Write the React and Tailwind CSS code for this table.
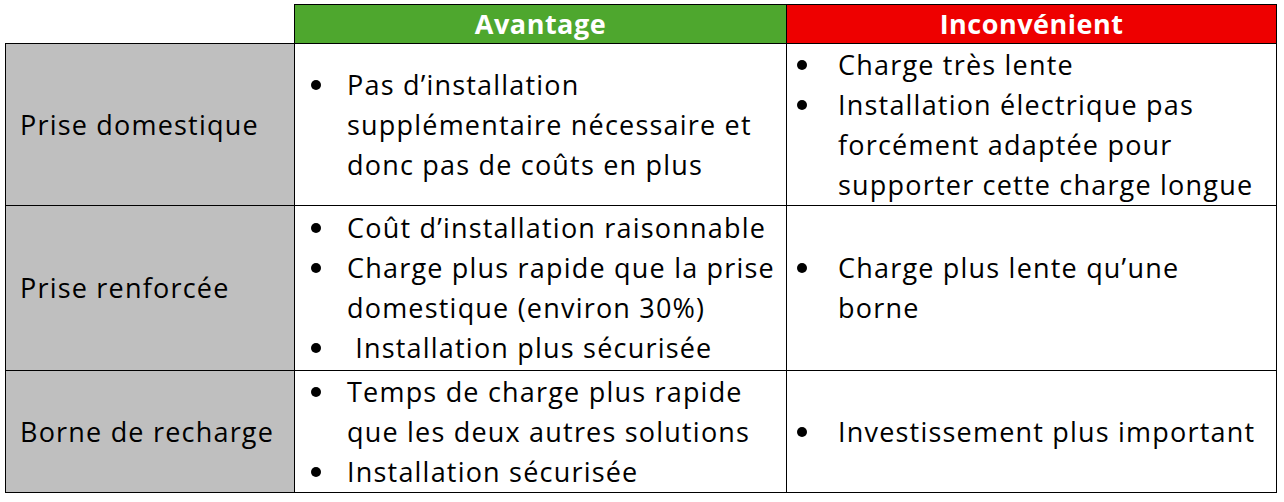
const rows = [
  {
    label: "Prise domestique",
    height: "h-[162px]",
    pros: [["Pas d’installation", "supplémentaire nécessaire et", "donc pas de coûts en plus"]],
    cons: [
      ["Charge très lente"],
      ["Installation électrique pas", "forcément adaptée pour", "supporter cette charge longue"],
    ],
  },
  {
    label: "Prise renforcée",
    height: "h-[165px]",
    pros: [
      ["Coût d’installation raisonnable"],
      ["Charge plus rapide que la prise", "domestique (environ 30%)"],
      ["\u00a0Installation plus sécurisée"],
    ],
    cons: [["Charge plus lente qu’une", "borne"]],
  },
  {
    label: "Borne de recharge",
    height: "h-[122px]",
    pros: [["Temps de charge plus rapide", "que les deux autres solutions"], ["Installation sécurisée"]],
    cons: [["Investissement plus important"]],
  },
];

function Bullets({ items, compact }) {
  return (
    <ul className="flex flex-col">
      {items.map((lines) => (
        <li key={lines[0]} className="flex items-start">
          <span
            className={
              compact
                ? "flex h-[40px] w-[51px] shrink-0 items-center pl-[10px]"
                : "flex h-[40px] w-[52px] shrink-0 items-center pl-[16px]"
            }
          >
            <span className="h-[10px] w-[10px] rounded-full bg-black"></span>
          </span>
          <span className="flex flex-col whitespace-nowrap">
            {lines.map((line) => (
              <span key={line}>{line}</span>
            ))}
          </span>
        </li>
      ))}
    </ul>
  );
}

export default function App() {
  return (
    <div
      className="bg-white pl-[5px] pt-[4px] text-[27px] leading-[40px] tracking-[1.2px] text-black"
      style={{ fontFamily: "'Open Sans', 'Liberation Sans', sans-serif" }}
    >
      <table className="w-[1271px] table-fixed border-collapse">
        <colgroup>
          <col className="w-[289px]" />
          <col className="w-[492px]" />
          <col className="w-[490px]" />
        </colgroup>
        <thead>
          <tr className="h-[39px]">
            <th className="border-0"></th>
            <th className="border border-black bg-[#4ea72e] text-center font-bold leading-[36px] tracking-[0.5px] text-white">
              Avantage
            </th>
            <th className="border border-black bg-[#ee0000] text-center font-bold leading-[36px] tracking-[0.5px] text-white">
              Inconvénient
            </th>
          </tr>
        </thead>
        <tbody>
          {rows.map((row) => (
            <tr key={row.label} className={row.height}>
              <td className="border border-black bg-[#bfbfbf] pl-[14px] align-middle">
                {row.label}
              </td>
              <td className="border border-black p-0 align-middle">
                <Bullets items={row.pros} />
              </td>
              <td className="border border-black p-0 align-middle">
                <Bullets items={row.cons} compact />
              </td>
            </tr>
          ))}
        </tbody>
      </table>
    </div>
  );
}
